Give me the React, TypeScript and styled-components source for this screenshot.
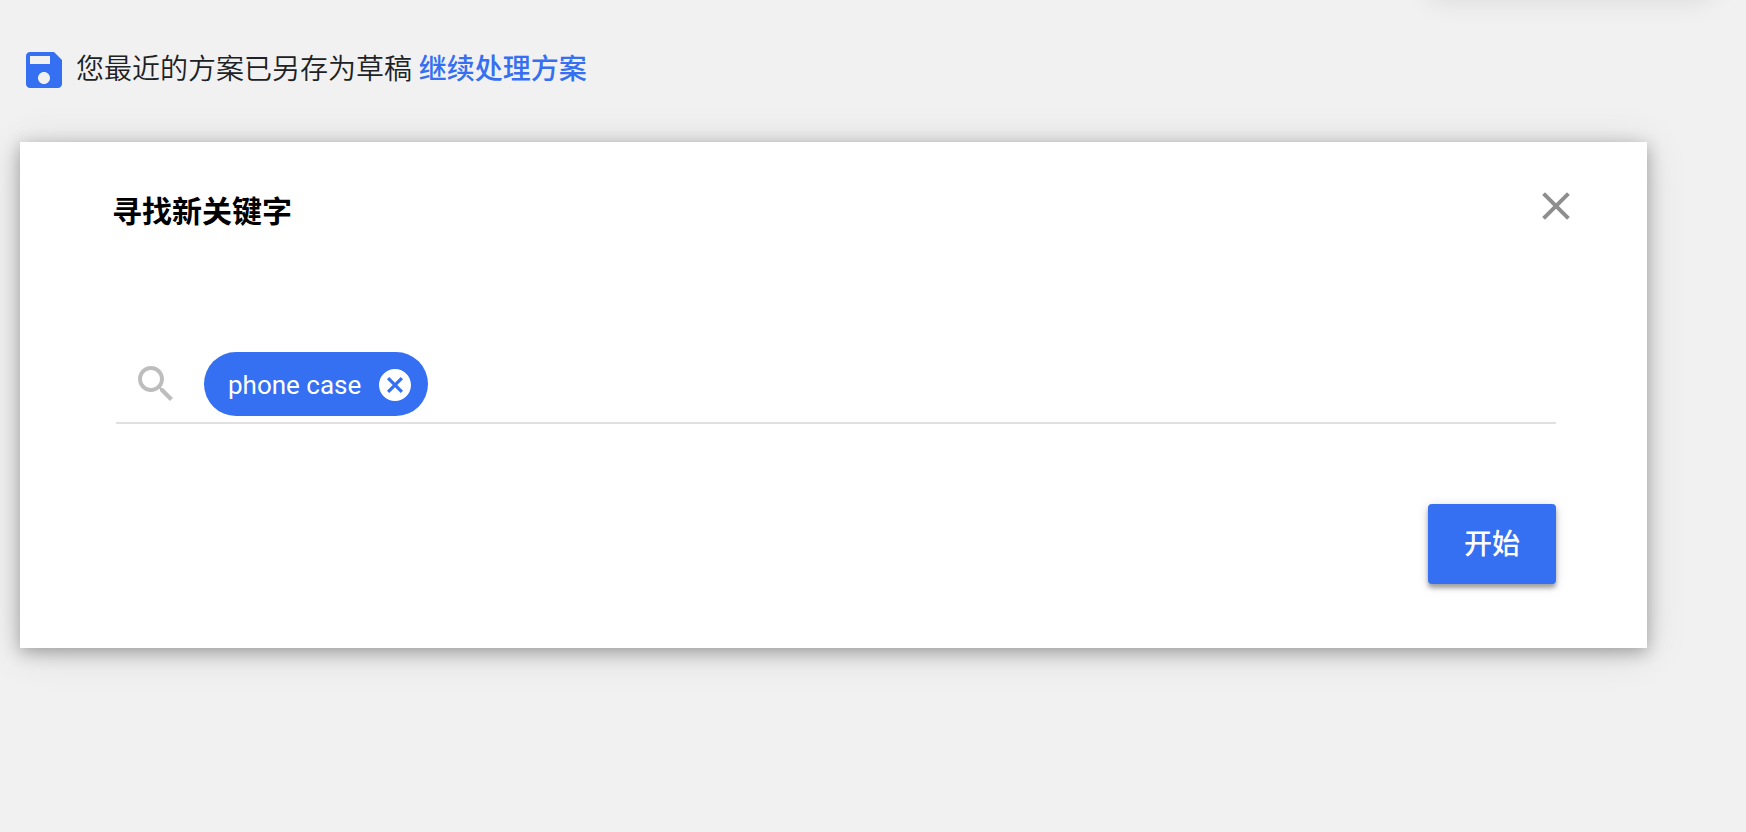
import React, { useState } from "react";
import styled, { createGlobalStyle } from "styled-components";

const blue = "#356ff2";

const GlobalStyle = createGlobalStyle`
  * { box-sizing: border-box; }
  html { min-height: 100%; background: #f1f1f1; }
  body {
    margin: 0;
    overflow-x: hidden;
    color: #202124;
    font-family: Roboto, "Noto Sans CJK SC", sans-serif;
    font-size: 28px;
    line-height: 40px;
  }
  svg { display: block; }
`;

const Page = styled.div`
  padding: 46px 99px 100px 20px;
`;

const FloatingPanel = styled.div`
  position: absolute;
  top: -48px;
  right: 36px;
  width: 280px;
  height: 44px;
  background: #fff;
  box-shadow: 0 4px 28px rgba(0, 0, 0, 0.1);
`;

const Notice = styled.p`
  display: flex;
  align-items: center;
  gap: 8px;
  height: 48px;
  margin: 0 0 48px;
  white-space: pre;
`;

const NoticeText = styled.span`
  font-weight: 350;
`;

const DraftLink = styled.a`
  color: ${blue};
  font-weight: 500;
  text-decoration: none;
`;

const Card = styled.section`
  padding: 40px 67px 64px 92px;
  background: #fff;
  box-shadow: 0 4px 16px rgba(0, 0, 0, 0.3), 0 4px 40px rgba(0, 0, 0, 0.12);
`;

const CardHeader = styled.header`
  display: flex;
  align-items: flex-start;
  justify-content: space-between;
  height: 60px;
`;

const Title = styled.h2`
  margin: 0;
  color: #000;
  font-size: 30px;
  font-weight: 700;
  line-height: 60px;
`;

const IconButton = styled.button`
  display: grid;
  place-items: center;
  width: ${(p: { $size: number }) => p.$size}px;
  height: ${(p: { $size: number }) => p.$size}px;
  padding: 0;
  border: 0;
  background: none;
  cursor: pointer;
`;

const Form = styled.form`
  display: flex;
  flex-direction: column;
  align-items: flex-end;
  gap: 80px;
  padding: 104px 24px 0 4px;
`;

const SearchRow = styled.div`
  display: flex;
  align-items: center;
  width: 100%;
  padding: 6px 16px;
  border-bottom: 2px solid #e0e0e0;
`;

const Chip = styled.span`
  display: flex;
  align-items: center;
  gap: 18px;
  height: 64px;
  margin-left: 24px;
  padding: 2px 17px 0 24px;
  border-radius: 32px;
  background: ${blue};
  color: #fff;
  font-size: 26px;
`;

const KeywordInput = styled.input`
  flex: 1;
  min-width: 0;
  height: 64px;
  padding: 0 16px;
  border: 0;
  outline: 0;
  background: none;
  font: inherit;
`;

const StartButton = styled.button`
  height: 80px;
  padding: 2px 36px 0;
  border: 0;
  border-radius: 4px;
  background: ${blue};
  box-shadow: 0 4px 4px rgba(0, 0, 0, 0.3), 0 2px 12px rgba(0, 0, 0, 0.16);
  color: #fff;
  font: inherit;
  font-weight: 500;
  cursor: pointer;
`;

const SaveIcon = () => (
  <svg width="48" height="48" viewBox="0 0 24 24" fill={blue} aria-hidden="true">
    <path
      fillRule="evenodd"
      d="M17 3H5c-1.11 0-2 .9-2 2v14c0 1.1.89 2 2 2h14c1.1 0 2-.9 2-2V7l-4-4zm-5 16c-1.66 0-3-1.34-3-3s1.34-3 3-3 3 1.34 3 3-1.34 3-3 3zm3-10H5V5h10v4z"
    />
  </svg>
);

const SearchIcon = () => (
  <svg width="48" height="48" viewBox="0 0 24 24" fill="#bdbdbd" aria-hidden="true">
    <path d="M15.5 14h-.79l-.28-.27C15.41 12.59 16 11.11 16 9.5 16 5.91 13.09 3 9.5 3S3 5.91 3 9.5 5.91 16 9.5 16c1.61 0 3.09-.59 4.23-1.57l.27.28v.79l5 4.99L20.49 19l-4.99-5zm-6 0C7.01 14 5 11.99 5 9.5S7.01 5 9.5 5 14 7.01 14 9.5 11.99 14 9.5 14z" />
  </svg>
);

const CloseIcon = () => (
  <svg width="28" height="28" viewBox="0 0 28 28" stroke="#8e8e8e" strokeWidth="4" aria-hidden="true">
    <path d="M1.6 1.6l24.8 24.8M26.4 1.6L1.6 26.4" />
  </svg>
);

const RemoveIcon = () => (
  <svg width="32" height="32" viewBox="2 2 20 20" fill="#fff" aria-hidden="true">
    <path d="M12 2C6.47 2 2 6.47 2 12s4.47 10 10 10 10-4.47 10-10S17.53 2 12 2zm5 13.59L15.59 17 12 13.41 8.41 17 7 15.59 10.59 12 7 8.41 8.41 7 12 10.59 15.59 7 17 8.41 13.41 12 17 15.59z" />
  </svg>
);

export default function App() {
  const [keywords, setKeywords] = useState<string[]>(["phone case"]);

  return (
    <>
      <GlobalStyle />
      <FloatingPanel />
      <Page>
        <Notice>
          <SaveIcon />
          <NoticeText>
            您最近的方案已另存为草稿 <DraftLink href="#draft">继续处理方案</DraftLink>
          </NoticeText>
        </Notice>
        <Card>
          <CardHeader>
            <Title>寻找新关键字</Title>
            <IconButton type="button" $size={48} aria-label="关闭">
              <CloseIcon />
            </IconButton>
          </CardHeader>
          <Form onSubmit={(e) => e.preventDefault()}>
            <SearchRow>
              <SearchIcon />
              {keywords.map((word) => (
                <Chip key={word}>
                  {word}
                  <IconButton
                    type="button"
                    $size={32}
                    aria-label="移除"
                    onClick={() => setKeywords(keywords.filter((k) => k !== word))}
                  >
                    <RemoveIcon />
                  </IconButton>
                </Chip>
              ))}
              <KeywordInput type="text" aria-label="关键字" />
            </SearchRow>
            <StartButton type="submit">开始</StartButton>
          </Form>
        </Card>
      </Page>
    </>
  );
}
